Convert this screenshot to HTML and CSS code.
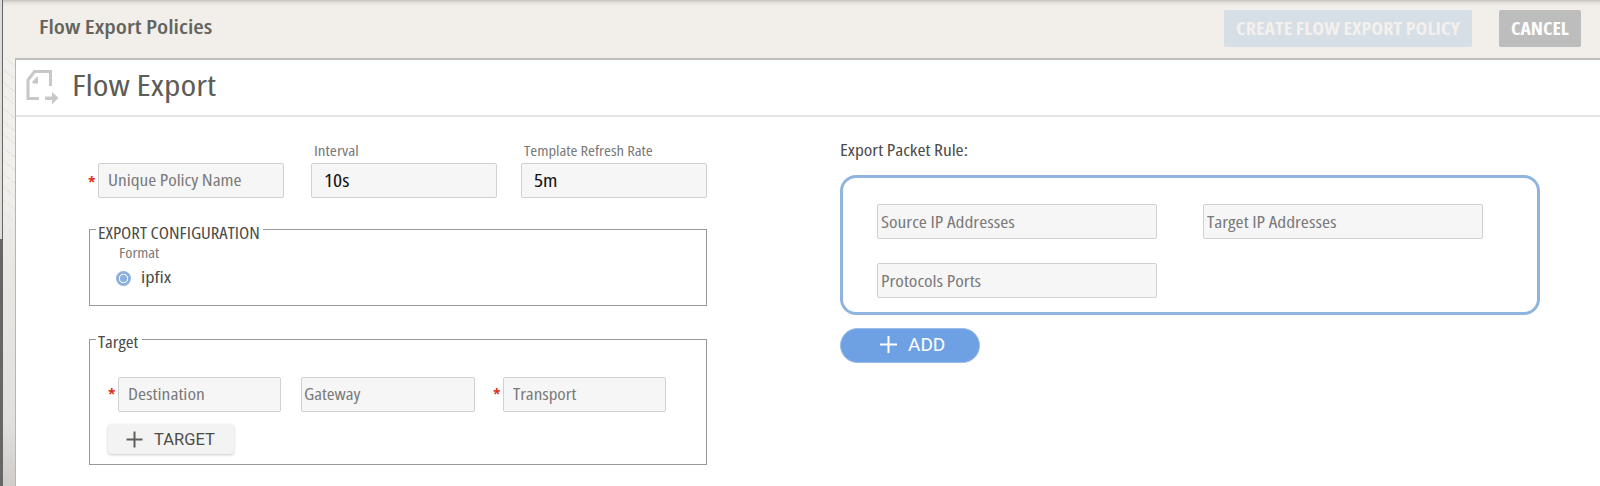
FILE: index.html
```html
<!DOCTYPE html>
<html lang="en">
<head>
<meta charset="utf-8">
<title>Flow Export Policies</title>
<link rel="stylesheet" href="styles.css">
</head>
<body>
<div class="rail"></div>
<div class="app">
  <header class="topbar">
    <h1 class="page-title"><span class="t t-page">Flow Export Policies</span></h1>
    <div class="actions">
      <div class="btn btn-create"><span class="t t-create">CREATE FLOW EXPORT POLICY</span></div>
      <div class="btn btn-cancel"><span class="t t-cancel">CANCEL</span></div>
    </div>
  </header>
  <main class="panel">
    <div class="panel-head">
      <svg class="flow-icon" width="34" height="36" viewBox="0 0 34 36">
        <path d="M13 31.500H2V13L8.500 4.500H24.500V19" fill="none" stroke="#c8c8c8" stroke-width="3"/>
        <path d="M12 10v6.500H6.500V14.500L10.500 10z" fill="#c8c8c8"/>
        <path d="M19 29.500h7v-4.500L32.500 31 26 37.500V33H19z" fill="#c8c8c8"/>
      </svg>
      <h2 class="panel-title"><span class="t t-panel">Flow Export</span></h2>
    </div>
    <div class="columns">
      <section class="left">
        <div class="row">
          <span class="star">*</span>
          <div class="input w186 pad"><span class="t t-name">Unique Policy Name</span></div>
          <div class="labeled gap-a">
            <span class="label"><span class="t t-interval">Interval</span></span>
            <div class="input w186 value"><span class="t t-10s">10s</span></div>
          </div>
          <div class="labeled gap-b">
            <span class="label"><span class="t t-template">Template Refresh Rate</span></span>
            <div class="input w186 value"><span class="t t-5m">5m</span></div>
          </div>
        </div>
        <div class="group config">
          <div class="legend legend-config"><span class="t t-config">EXPORT CONFIGURATION</span></div>
          <div class="format"><span class="t t-format">Format</span></div>
          <div class="option"><span class="radio"></span><span class="t t-ipfix">ipfix</span></div>
        </div>
        <div class="group target">
          <div class="legend legend-target"><span class="t t-legend">Target</span></div>
          <div class="target-row">
            <span class="star">*</span>
            <div class="input w163 pad"><span class="t t-dest">Destination</span></div>
            <div class="input w174"><span class="t t-gate">Gateway</span></div>
            <span class="star star-2">*</span>
            <div class="input w163 pad"><span class="t t-trans">Transport</span></div>
          </div>
          <div class="btn-target">
            <svg width="17" height="17" viewBox="0 0 17 17"><path d="M8.500 0.500v16M0.500 8.500h16" stroke="#5f5f5a" stroke-width="2"/></svg>
            <span class="t t-target">TARGET</span>
          </div>
        </div>
      </section>
      <section class="right">
        <div class="rule-title"><span class="t t-rule">Export Packet Rule:</span></div>
        <div class="rule">
          <div class="input"><span class="t t-src">Source IP Addresses</span></div>
          <div class="input"><span class="t t-tgt">Target IP Addresses</span></div>
          <div class="input"><span class="t t-prot">Protocols Ports</span></div>
        </div>
        <div class="btn-add">
          <svg width="17" height="17" viewBox="0 0 17 17"><path d="M8.500 0v17M0 8.500h17" stroke="#fff" stroke-width="2"/></svg>
          <span class="t t-add">ADD</span>
        </div>
      </section>
    </div>
  </main>
</div>
</body>
</html>
```
FILE: styles.css
```css
* { box-sizing: border-box; }
body {
  margin: 0;
  height: 486px;
  display: flex;
  overflow: hidden;
  background: #f1efeb;
  font-family: "Open Sans", "Noto Sans", sans-serif;
  font-stretch: 75%;
  color: #4c4c47;
}
h1, h2 { margin: 0; font-weight: inherit; }

/* Condensed faces widened to the label widths */
.t { display: inline-block; white-space: nowrap; transform-origin: 0 50%; transform: scaleX(1.2); }
.t-create { transform: scaleX(1.085); }
.t-cancel { transform: scaleX(1.06); }
.t-panel { transform: scaleX(1.235); }
.t-name { transform: scaleX(1.205); }
.t-interval { transform: scaleX(1.22); }
.t-template { transform: scaleX(1.19); }
.t-10s, .t-5m { transform: scaleX(1.19); }
.t-config, .t-legend { transform: scaleX(1.175); }
.t-format { transform: scaleX(1.17); }
.t-dest { transform: scaleX(1.22); }
.t-gate { transform: scaleX(1.18); }
.t-trans { transform: scaleX(1.19); }
.t-rule, .t-src, .t-tgt, .t-prot { transform: scaleX(1.215); }
.t-target, .t-add { transform: none; font-family: Roboto, "Open Sans", sans-serif; font-stretch: normal; }

.rail {
  flex: none;
  width: 3px;
  background:
    linear-gradient(#666, #666) 0 239px / 3px 247px no-repeat,
    linear-gradient(90deg, #dcdcda 2px, #666 2px);
}
.app {
  flex: 1;
  min-width: 0;
  display: flex;
  flex-direction: column;
  background:
    linear-gradient(#f1efeb, #f1efeb) 0 0 / 100% 57px no-repeat,
    linear-gradient(transparent 180px, #eae8e5 260px, #e2e0de 420px, #cfccca 486px),
    repeating-linear-gradient(40deg, #f1f0ec 0 9px, #e6e4df 9px 10px);
}
.topbar {
  flex: none;
  height: 58px;
  padding: 10px 19px 0 36px;
  display: flex;
  justify-content: space-between;
  background: linear-gradient(#c4c0bc 0, #dedad6 2px, #ece8e4 4px, #f2eeea 7px);
}
.page-title { font-size: 20px; font-weight: 600; line-height: 34px; color: #64645e; }
.actions { display: flex; gap: 27px; }
.btn {
  height: 37px;
  padding-left: 12px;
  border-radius: 2px;
  font-size: 18.500px;
  font-weight: 700;
  line-height: 36px;
}
.btn-create { width: 248px; background: #d6dee6; color: #f3f0ed; }
.btn-cancel { width: 82px; background: #bdbdbd; color: #fff; }

.panel {
  flex: 1;
  margin-left: 12px;
  border-top: 2px solid #bdbdbd;
  border-left: 1px solid #b5b5b5;
  background: #fff;
}
.panel-head {
  height: 57px;
  padding: 7px 0 0 10px;
  display: flex;
  gap: 12px;
  border-bottom: 2px solid #e3e3e3;
}
.flow-icon { overflow: visible; }
.panel-title { font-size: 29px; line-height: 36px; color: #5d5d57; }
.columns { display: flex; align-items: flex-start; }
.left { width: 619px; margin-left: 72px; padding-top: 23px; }
.row { display: flex; align-items: flex-end; height: 58px; }
.input {
  flex: none;
  height: 35px;
  padding-left: 3px;
  border: 1px solid #d0d0d0;
  border-radius: 2px;
  background: #f6f6f6;
  color: #7a7a7a;
  font-size: 16px;
  line-height: 34px;
}
.pad { padding-left: 9px; line-height: 32px; }
.value { padding-left: 12px; color: #111; font-size: 18px; line-height: 33px; }
.w186 { width: 186px; }
.w163 { width: 163px; }
.w174 { width: 174px; margin-left: 20px; padding-left: 2px; line-height: 32px; }
.star {
  flex: none;
  width: 10px;
  height: 35px;
  color: #e02b10;
  font-size: 18px;
  font-weight: 600;
  line-height: 40px;
}
.labeled { display: flex; flex-direction: column; }
.gap-a { margin-left: 27px; }
.gap-b { margin-left: 24px; }
.label { height: 23px; padding-left: 3px; font-size: 14px; line-height: 22px; color: #7a7a7a; }

.group { width: 618px; margin-left: 1px; border: 1px solid #999; }
.config { height: 77px; margin-top: 31px; }
.target { height: 126px; margin-top: 33px; }
.legend {
  height: 20px;
  margin: -7px 0 0 6px;
  padding-left: 2px;
  background: #fff;
  font-size: 16px;
  line-height: 21px;
}
.legend-config { width: 167px; }
.legend-target { width: 46px; line-height: 18px; }
.format { padding-left: 29px; height: 19px; font-size: 14px; line-height: 19px; color: #7a7a7a; }
.option { display: flex; align-items: center; gap: 10px; margin-top: 4px; padding-left: 26px; height: 24px; font-size: 17px; }
.option .t { margin-top: -3px; }
.radio {
  width: 15px;
  height: 15px;
  border-radius: 50%;
  background: radial-gradient(circle, #8db0de 3.500px, #e9f1fa 3.800px 4.700px, #8db0de 5px);
}
.target-row { display: flex; margin-top: 24px; padding-left: 18px; }
.target-row .star { width: 10px; line-height: 36px; }
.target-row .star-2 { margin-left: 18px; }
.btn-target {
  display: flex;
  align-items: center;
  gap: 11px;
  width: 126px;
  height: 30px;
  margin: 12px 0 0 18px;
  padding-left: 18px;
  border-radius: 4px;
  background: #f3f3f3;
  box-shadow: 0 1px 3px rgba(0, 0, 0, .22);
  font-size: 16.500px;
}
.right { width: 700px; margin-left: 133px; padding-top: 23px; }
.rule-title { height: 35px; font-size: 16px; line-height: 21px; }
.rule {
  height: 140px;
  padding: 26px 34px 0;
  display: grid;
  grid-template-columns: 280px 280px;
  grid-template-rows: 35px 35px;
  gap: 24px 46px;
  border: 3px solid #90b4e0;
  border-radius: 16px;
}
.btn-add {
  display: flex;
  align-items: center;
  gap: 11px;
  width: 140px;
  height: 35px;
  margin-top: 13px;
  padding: 0 0 2px 39px;
  border: 1px solid #9bbce6;
  border-radius: 18px;
  background: #6ea1e3;
  color: #fff;
  font-size: 19px;
}
```
